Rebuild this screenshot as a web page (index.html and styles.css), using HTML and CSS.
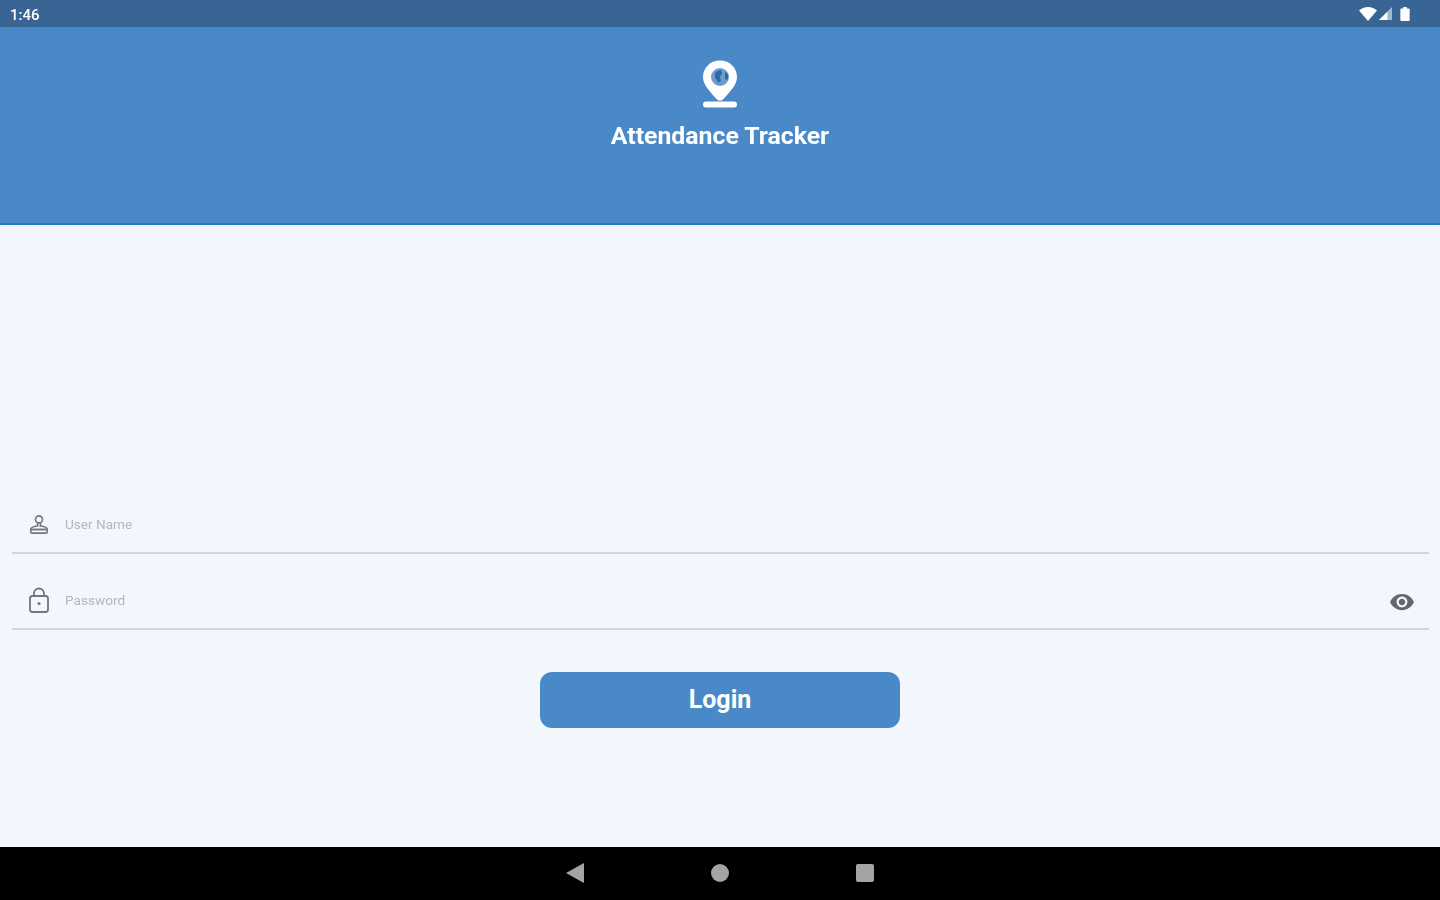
FILE: index.html
```html
<!DOCTYPE html>
<html lang="en">
<head>
  <meta charset="UTF-8" />
  <meta name="viewport" content="width=device-width, initial-scale=1" />
  <title>Attendance Tracker</title>
  <link rel="stylesheet" href="styles.css">
</head>
<body>

  <div class="status-bar">
    <span class="status-time">1:46</span>
    <div class="status-icons">
      <svg class="icon-wifi" viewBox="0 0 18 14"><path d="M0 3.500C2.500 1.200 5.500 0 9 0s6.500 1.200 9 3.500L9 14z"/></svg>
      <svg class="icon-signal" viewBox="0 0 14 14"><path d="M14 0v14H0z" opacity=".55"/><path d="M9 5v9H0z"/></svg>
      <svg class="icon-battery" viewBox="0 0 10 15"><path d="M3 0h4v1.500h2a1 1 0 0 1 1 1V14a1 1 0 0 1-1 1H1a1 1 0 0 1-1-1V2.500a1 1 0 0 1 1-1h2z"/></svg>
    </div>
  </div>

  <header class="app-header">
    <svg class="logo" viewBox="0 0 36 48">
      <path class="logo-pin" d="M18 0C8 0 1 7.500 1 16.500 1 24 7 30 14.500 38.500c1.800 2 5.200 2 7 0C29 30 35 24 35 16.500 35 7.500 28 0 18 0z"/>
      <circle class="logo-globe" cx="18" cy="16.500" r="9"/>
      <path class="logo-land" d="M13 12l6-3 1 4-2 3 1 5-3 1-3-5zM23 11l3 3 0 5-3 0z"/>
      <rect class="logo-pin" x="1" y="41" width="34" height="6" rx="3"/>
    </svg>
    <h1 class="app-title">Attendance Tracker</h1>
  </header>

  <main class="login-page">
    <form class="login-form">
      <div class="field">
        <svg class="field-icon" viewBox="0 0 24 24">
          <circle cx="12" cy="7" r="3.800"/>
          <path d="M10.500 10.800v3.200c-3 .6-7.500 1.200-7.500 3.600v.4h18v-.4c0-2.400-4.500-3-7.500-3.600v-3.200"/>
          <rect x="3" y="18" width="18" height="4" rx="1.500"/>
        </svg>
        <span class="field-label">User Name</span>
      </div>
      <div class="field">
        <svg class="field-icon lock-icon" viewBox="0 0 22 26">
          <rect x="2" y="9" width="18" height="16" rx="2.500"/>
          <path d="M6 9V6.500a5 5 0 0 1 10 0V9"/>
          <circle class="lock-dot" cx="11" cy="16.500" r="1.600"/>
        </svg>
        <span class="field-label">Password</span>
        <svg class="eye-icon" viewBox="0 0 24 24"><path d="M12 4.500C7 4.500 2.730 7.610 1 12c1.730 4.390 6 7.500 11 7.500s9.270-3.110 11-7.500c-1.730-4.390-6-7.500-11-7.500zM12 17c-2.760 0-5-2.240-5-5s2.240-5 5-5 5 2.240 5 5-2.240 5-5 5zm0-8c-1.660 0-3 1.340-3 3s1.340 3 3 3 3-1.340 3-3-1.340-3-3-3z"/></svg>
      </div>
      <button class="login-btn" type="button">Login</button>
    </form>
  </main>

  <nav class="nav-bar">
    <svg class="nav-back" viewBox="0 0 18 20"><path d="M0 10L17 0.500a.500.500 0 0 1 1 .5v18a.500.500 0 0 1-1 .5z"/></svg>
    <div class="nav-home"></div>
    <div class="nav-recent"></div>
  </nav>

</body>
</html>
```

FILE: styles.css
```css
* {
  margin: 0;
  padding: 0;
  box-sizing: border-box;
}
html, body {
  height: 100%;
}
body {
  display: flex;
  flex-direction: column;
  height: 900px;
  overflow: hidden;
  background-color: #f2f6fd;
  font-family: Roboto, "Liberation Sans", sans-serif;
}
.status-bar {
  height: 27px;
  flex-shrink: 0;
  display: flex;
  align-items: center;
  justify-content: space-between;
  padding: 2px 30px 0 10px;
  background-color: #396595;
  color: #fff;
}
.status-time {
  font-size: 15px;
  font-weight: 500;
  filter: blur(.7px);
}
.status-icons {
  display: flex;
  align-items: center;
  gap: 2px;
  margin-top: -2px;
  filter: blur(.5px);
}
.status-icons svg {
  fill: #fff;
  display: block;
}
.icon-wifi {
  width: 18px;
  height: 14px;
}
.icon-signal {
  width: 13px;
  height: 13px;
}
.icon-battery {
  width: 10px;
  height: 14px;
  margin-left: 6px;
}
.app-header {
  height: 198px;
  flex-shrink: 0;
  display: flex;
  flex-direction: column;
  align-items: center;
  padding-top: 33px;
  background-color: #4989c7;
  border-bottom: 2px solid #1f80c8;
}
.logo {
  width: 36px;
  height: 49px;
  display: block;
  filter: blur(.6px);
}
.logo-pin {
  fill: #fff;
}
.logo-globe {
  fill: #6d9dcd;
}
.logo-land {
  fill: #2f6aa5;
}
.app-title {
  margin-top: 12px;
  font-size: 24.800px;
  line-height: 30px;
  font-weight: 700;
  color: #fff;
  filter: blur(.6px);
}
.login-page {
  flex: 1;
  padding: 0 11px 0 12px;
  display: flex;
  flex-direction: column;
}
.login-form {
  margin-top: 271px;
  display: flex;
  flex-direction: column;
}
.field {
  height: 58px;
  display: flex;
  align-items: center;
  padding: 0 16px;
  border-bottom: 2px solid #d3d5d9;
  margin-bottom: 18px;
  color: #b4b7bc;
}
.field-icon {
  width: 22px;
  height: 24px;
  fill: none;
  stroke: #73777c;
  stroke-width: 1.800;
  flex-shrink: 0;
  filter: blur(.4px);
}
.lock-icon {
  height: 26px;
}
.field-label {
  margin-left: 15px;
  font-size: 13.600px;
  filter: blur(.7px);
}
.lock-dot {
  fill: #73777c;
  stroke: none;
}
.eye-icon {
  width: 26px;
  height: 26px;
  margin-left: auto;
  margin-right: -2px;
  margin-top: 4px;
  fill: #63676c;
  filter: blur(.5px);
}
.login-btn {
  align-self: center;
  width: 360px;
  height: 56px;
  margin-top: 24px;
  margin-right: 1px;
  padding-bottom: 2px;
  border: none;
  border-radius: 12px;
  background-color: #4989c7;
  color: #fff;
  font-family: inherit;
  font-size: 25px;
  font-weight: 700;
  cursor: pointer;
}
.nav-bar {
  height: 53px;
  flex-shrink: 0;
  display: flex;
  align-items: center;
  justify-content: center;
  gap: 127px;
  padding-bottom: 1px;
  background-color: #000;
}
.nav-back {
  width: 18px;
  height: 20px;
  fill: #a4a4a4;
}
.nav-home {
  width: 18px;
  height: 18px;
  border-radius: 50%;
  background-color: #a4a4a4;
}
.nav-recent {
  width: 18px;
  height: 18px;
  border-radius: 2px;
  background-color: #a4a4a4;
}
```
